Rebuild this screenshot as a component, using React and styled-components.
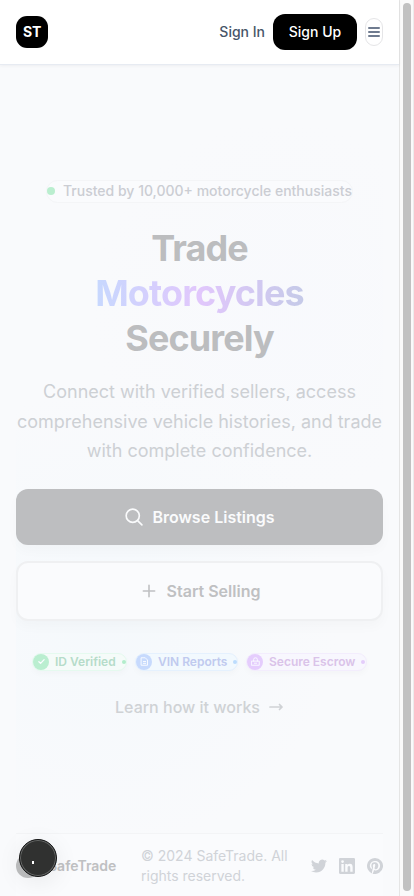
import React from "react";
import styled, { createGlobalStyle } from "styled-components";

const GlobalStyle = createGlobalStyle`
  * { box-sizing: border-box; }
  body { margin: 0; font-family: Inter, sans-serif; background: #f9fafc; overflow: hidden; -webkit-font-smoothing: antialiased; }
  button { font-family: inherit; margin: 0; padding: 0; border: 0; background: none; }
  h1, p { margin: 0; }
  svg { display: block; flex-shrink: 0; }
`;

const Page = styled.div`
  display: grid;
  grid-template-columns: 399px 15px;
  width: 414px;
  height: 896px;
  overflow: hidden;
`;
const Column = styled.div`
  display: flex;
  flex-direction: column;
  height: 896px;
`;
const ScrollTrack = styled.div`
  background: #fafafa;
  border-left: 1px solid #e5e5e5;
  border-right: 1px solid #ececec;
  padding: 3px 2px 5px 3px;
`;
const ScrollThumb = styled.div`
  height: 888px;
  width: 8px;
  border-radius: 4px;
  background: #c1c1c1;
`;

const Header = styled.header`
  display: flex;
  align-items: center;
  gap: 8px;
  height: 65px;
  flex-shrink: 0;
  padding: 0 16px;
  background: #fff;
  border-bottom: 1px solid #e7ebf2;
  box-shadow: 0 1px 3px rgba(15, 23, 42, 0.05);
  z-index: 1;
`;
const Logo = styled.div`
  display: grid;
  place-items: center;
  width: 32px;
  height: 32px;
  margin-right: auto;
  border-radius: 11px;
  background: #000;
  color: #fff;
  font-size: 14px;
  font-weight: 700;
  letter-spacing: -0.2px;
  padding-bottom: 1px;
`;
const SignIn = styled.button`
  color: #475569;
  font-size: 14px;
  font-weight: 500;
  line-height: 20px;
`;
const SignUp = styled.button`
  width: 84px;
  height: 36px;
  padding-bottom: 2px;
  border-radius: 12px;
  background: #000;
  color: #fff;
  font-size: 14px;
  font-weight: 500;
`;
const MenuButton = styled.button`
  display: grid;
  place-items: center;
  width: 18px;
  height: 28px;
  border: 1px solid #e5e5e7;
  border-radius: 9px;
  color: #6f7b8f;
`;

const Main = styled.main`
  flex: 1;
  display: flex;
  flex-direction: column;
  padding: 0 16px;
  background: #f9fafc;
`;
const Hero = styled.section`
  display: flex;
  flex-direction: column;
  align-items: center;
  height: 768px;
  padding-top: 115px;
  background:
    radial-gradient(circle at 72% 32%, rgba(246, 248, 254, 0.4), transparent 190px),
    radial-gradient(circle at 25% 72%, rgba(242, 248, 252, 0.6), transparent 230px);
`;
const TrustBadge = styled.div`
  display: flex;
  align-items: center;
  gap: 8px;
  height: 23px;
  width: 307px;
  padding-bottom: 2px;
  border: 1px solid #f4f5f7;
  border-radius: 12px;
  background: #fafbfd;
  color: #cbcdd3;
  font-size: 14px;
  font-weight: 500;
  line-height: 18px;
  white-space: nowrap;
`;
const StatusDot = styled.span`
  width: 8px;
  height: 8px;
  flex-shrink: 0;
  border-radius: 50%;
  background: #baeecf;
`;
const Title = styled.h1`
  margin-top: 23px;
  color: #bcbdbf;
  font-size: 36px;
  font-weight: 700;
  line-height: 45px;
  letter-spacing: -0.9px;
  text-align: center;
`;
const TitleAccent = styled.span`
  display: block;
  background: linear-gradient(90deg, #c7d8fe, #e1c7fc 50%, #c5cae8);
  background-clip: text;
  -webkit-background-clip: text;
  color: transparent;
`;
const Lead = styled.p`
  margin-top: 16px;
  color: #cdd0d4;
  font-size: 18px;
  line-height: 29.5px;
  text-align: center;
  white-space: nowrap;
`;
const Action = styled.button`
  display: flex;
  align-items: center;
  justify-content: center;
  gap: 8px;
  width: 100%;
  height: ${(p) => (p.$outline ? 60 : 56)}px;
  flex-shrink: 0;
  margin-top: ${(p) => (p.$outline ? 16 : 23)}px;
  border: ${(p) => (p.$outline ? "2px solid #eff0f2" : "0")};
  border-radius: 12px;
  background: ${(p) => (p.$outline ? "#fafbfd" : "#bdbec0")};
  color: ${(p) => (p.$outline ? "#bfc0c2" : "#fafbfc")};
  box-shadow: 0 6px 12px rgba(15, 23, 42, 0.025);
  font-size: 16px;
  font-weight: 600;
`;
const Features = styled.div`
  display: flex;
  gap: 8px;
  margin-top: 32px;
`;
const Chip = styled.div`
  display: flex;
  align-items: center;
  width: ${(p) => p.$width}px;
  height: 18px;
  border: 1px solid ${(p) => p.$border};
  border-radius: 9px;
  background: ${(p) => p.$fill};
  box-shadow: 0 3px 6px rgba(15, 23, 42, 0.025);
  color: ${(p) => p.$color};
  font-size: 12px;
  font-weight: 600;
  white-space: nowrap;
`;
const ChipIcon = styled.span`
  display: grid;
  place-items: center;
  width: 16px;
  height: 16px;
  margin-right: 6px;
  flex-shrink: 0;
  border-radius: 50%;
  background: ${(p) => p.$color};
  color: #fafcff;
`;
const ChipDot = styled.span`
  width: 4px;
  height: 4px;
  margin-left: 6px;
  flex-shrink: 0;
  border-radius: 50%;
  background: ${(p) => p.$color};
`;
const LearnMore = styled.div`
  display: flex;
  align-items: center;
  gap: 8px;
  margin-top: 23px;
  color: #cfd2d5;
  font-size: 16px;
  font-weight: 500;
  line-height: 26px;
`;

const Footer = styled.footer`
  display: grid;
  grid-template-columns: 125px 170px 72px;
  align-items: center;
  height: 63px;
  padding-top: 2px;
  border-top: 1px solid #f3f4f6;
  background: #fafbfd;
`;
const Brand = styled.div`
  display: flex;
  align-items: center;
  gap: 8px;
  padding-bottom: 1px;
  color: #bfc0c2;
  font-size: 14px;
  font-weight: 600;
`;
const BrandMark = styled.span`
  width: 24px;
  height: 24px;
  border-radius: 50%;
  background: #bebfc0;
`;
const Copyright = styled.p`
  color: #d0d3d8;
  font-size: 14px;
  line-height: 20px;
`;
const Socials = styled.div`
  display: flex;
  gap: 12px;
  color: #d0d3d8;
`;
const FloatingButton = styled.button`
  position: fixed;
  left: 19px;
  bottom: 19px;
  width: 38px;
  height: 38px;
  border: 1px solid #151616;
  border-radius: 50%;
  background: #303130;
  box-shadow: inset 0 0 0 1px #656766, 0 5px 24px rgba(0, 0, 0, 0.08);
`;
const Spark = styled.span`
  position: absolute;
  left: 12px;
  top: 21px;
  width: 2px;
  height: 3px;
  background: #fff;
`;

const Line = ({ size = 20, width = 2, box = 24, children }) => (
  <svg width={size} height={size} viewBox={`0 0 ${box} ${box}`} fill="none" stroke="currentColor" strokeWidth={width} strokeLinecap="round" strokeLinejoin="round">
    {children}
  </svg>
);
const Social = ({ d, size = 16 }) => (
  <svg width={size} height={size} viewBox="0 0 24 24" fill="currentColor"><path d={d} /></svg>
);

const features = [
  { label: "ID Verified", width: 95, color: "#b6dcc9", fill: "#f5fbf9", border: "#e5faef", icon: "#baeed0", dot: "#b2edcc", art: <path d="m5 12.5 4.5 4.5L19 7" strokeWidth="3.5" /> },
  { label: "VIN Reports", width: 103, color: "#c0caef", fill: "#f2f9fe", border: "#e5f1fe", icon: "#c7dafd", dot: "#bcdcfd", art: <path d="M4 2h10l6 6v14H4ZM9 12h6M9 17h6" /> },
  { label: "Secure Escrow", width: 121, color: "#dac3e9", fill: "#f8f7fe", border: "#f3edfd", icon: "#e5cdfd", dot: "#e4cdfb", art: <path d="M2 11h20v11H2ZM7 11V7a5 5 0 0 1 10 0v4M9 16.5h6" /> },
];

export default function App() {
  return (
    <>
      <GlobalStyle />
      <Page>
        <Column>
          <Header>
            <Logo>ST</Logo>
            <SignIn>Sign In</SignIn>
            <SignUp>Sign Up</SignUp>
            <MenuButton aria-label="Menu">
              <svg width="12" height="10" viewBox="0 0 12 10" stroke="currentColor" strokeWidth="2" strokeLinecap="round">
                <path d="M1 1h10M1 5h10M1 9h10" />
              </svg>
            </MenuButton>
          </Header>
          <Main>
            <Hero>
              <TrustBadge><StatusDot />Trusted by 10,000+ motorcycle enthusiasts</TrustBadge>
              <Title>Trade<TitleAccent>Motorcycles</TitleAccent>Securely</Title>
              <Lead>
                Connect with verified sellers, access<br />
                comprehensive vehicle histories, and trade<br />
                with complete confidence.
              </Lead>
              <Action>
                <Line><circle cx="10.5" cy="10.5" r="7.9" /><path d="m16.3 16.3 5.2 5.2" /></Line>
                Browse Listings
              </Action>
              <Action $outline>
                <Line size={20} width={1.9}><path d="M12 5.2v13.6M5.2 12h13.6" /></Line>
                Start Selling
              </Action>
              <Features>
                {features.map((f) => (
                  <Chip key={f.label} $width={f.width} $color={f.color} $fill={f.fill} $border={f.border}>
                    <ChipIcon $color={f.icon}><Line size={9} width={2.5}>{f.art}</Line></ChipIcon>
                    {f.label}
                    <ChipDot $color={f.dot} />
                  </Chip>
                ))}
              </Features>
              <LearnMore>
                Learn how it works
                <Line size={16} width={1.7} box={16}><path d="M2 8h12M11.5 5.5 14 8l-2.5 2.5" /></Line>
              </LearnMore>
            </Hero>
            <Footer>
              <Brand><BrandMark />SafeTrade</Brand>
              <Copyright>© 2024 SafeTrade. All<br />rights reserved.</Copyright>
              <Socials>
                <Social d="M23.95 4.57a10 10 0 0 1-2.82.77 4.96 4.96 0 0 0 2.16-2.72c-.95.55-2 .95-3.13 1.18a4.92 4.92 0 0 0-8.38 4.48C7.69 8.1 4.07 6.13 1.64 3.16a4.92 4.92 0 0 0 1.52 6.57 4.9 4.9 0 0 1-2.23-.61v.06a4.92 4.92 0 0 0 3.95 4.83 5 5 0 0 1-2.21.08 4.94 4.94 0 0 0 4.6 3.42A9.87 9.87 0 0 1 0 19.54a14 14 0 0 0 7.55 2.21c9.05 0 14-7.5 14-13.98 0-.21 0-.42-.02-.63a9.94 9.94 0 0 0 2.42-2.57Z" />
                <Social d="M20.45 20.45h-3.56v-5.57c0-1.33-.02-3.04-1.85-3.04-1.85 0-2.14 1.45-2.14 2.95v5.66H9.35V9h3.41v1.56h.05a3.75 3.75 0 0 1 3.37-1.85c3.6 0 4.27 2.37 4.27 5.46ZM5.34 7.43a2.06 2.06 0 1 1 0-4.13 2.06 2.06 0 0 1 0 4.13Zm1.78 13.02H3.56V9h3.56ZM22.22 0H1.77C.79 0 0 .77 0 1.73v20.54C0 23.23.79 24 1.77 24h20.45A1.76 1.76 0 0 0 24 22.27V1.73A1.76 1.76 0 0 0 22.22 0Z" />
                <Social d="M12 0a12 12 0 0 0-4.37 23.17c-.1-.95-.2-2.4.04-3.44l1.41-5.96s-.36-.72-.36-1.78c0-1.67.97-2.91 2.17-2.91 1.02 0 1.52.77 1.52 1.69 0 1.02-.66 2.56-1 3.98-.28 1.19.6 2.17 1.78 2.17 2.13 0 3.77-2.25 3.77-5.49 0-2.87-2.06-4.88-5.01-4.88a5.19 5.19 0 0 0-5.42 5.2c0 1.03.4 2.14.89 2.74.1.12.11.22.08.34l-.33 1.36c-.05.22-.18.27-.4.16-1.5-.69-2.43-2.88-2.43-4.63 0-3.77 2.74-7.24 7.91-7.24 4.15 0 7.38 2.96 7.38 6.91 0 4.12-2.6 7.44-6.21 7.44-1.21 0-2.35-.63-2.74-1.38l-.75 2.85c-.27 1.04-1 2.35-1.49 3.15A12 12 0 1 0 12 0Z" />
              </Socials>
            </Footer>
          </Main>
        </Column>
        <ScrollTrack><ScrollThumb /></ScrollTrack>
      </Page>
      <FloatingButton aria-label="Assistant"><Spark /></FloatingButton>
    </>
  );
}
